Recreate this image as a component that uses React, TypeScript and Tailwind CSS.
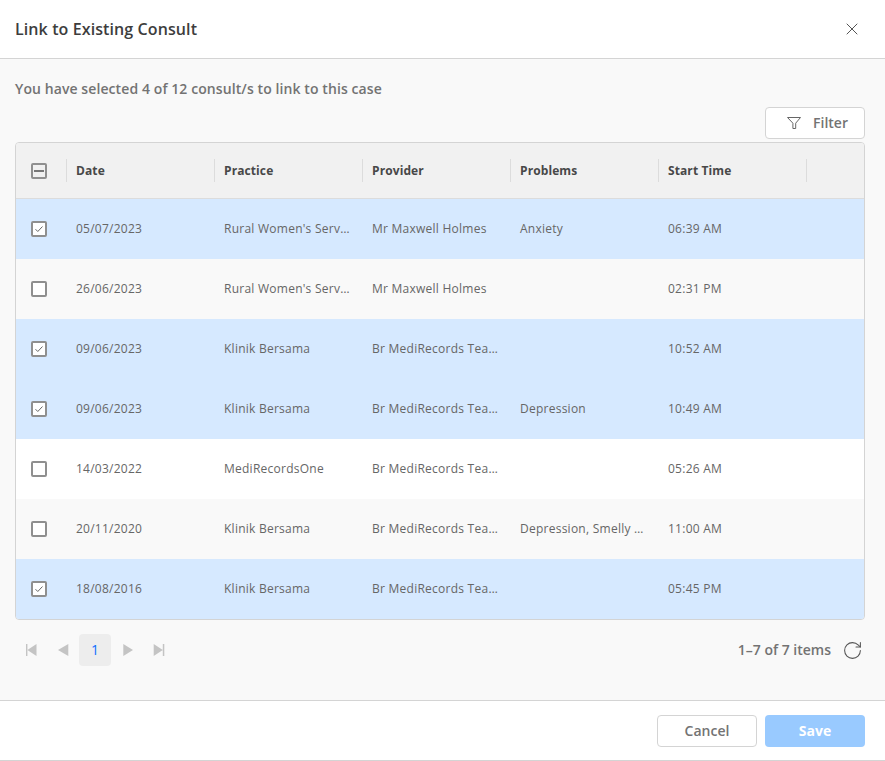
import React from "react";
import { X, RotateCw } from "lucide-react";

interface Consult {
  date: string;
  practice: string;
  provider: string;
  problems: string;
  time: string;
  selected: boolean;
}

const consults: Consult[] = [
  { date: "05/07/2023", practice: "Rural Women's Services", provider: "Mr Maxwell Holmes", problems: "Anxiety", time: "06:39 AM", selected: true },
  { date: "26/06/2023", practice: "Rural Women's Services", provider: "Mr Maxwell Holmes", problems: "", time: "02:31 PM", selected: false },
  { date: "09/06/2023", practice: "Klinik Bersama", provider: "Br MediRecords Team", problems: "", time: "10:52 AM", selected: true },
  { date: "09/06/2023", practice: "Klinik Bersama", provider: "Br MediRecords Team", problems: "Depression", time: "10:49 AM", selected: true },
  { date: "14/03/2022", practice: "MediRecordsOne", provider: "Br MediRecords Team", problems: "", time: "05:26 AM", selected: false },
  { date: "20/11/2020", practice: "Klinik Bersama", provider: "Br MediRecords Team", problems: "Depression, Smelly Feet", time: "11:00 AM", selected: false },
  { date: "18/08/2016", practice: "Klinik Bersama", provider: "Br MediRecords Team", problems: "", time: "05:45 PM", selected: true },
];

const columns = ["Date", "Practice", "Provider", "Problems", "Start Time"];

const Checkbox: React.FC<{ state: "on" | "off" | "mixed" }> = ({ state }) => (
  <span
    className={`w-4 h-4 rounded-[2px] border-2 border-[#8f8f8f] flex items-center justify-center ${
      state === "mixed" ? "bg-[#f0f0f0]" : "bg-white"
    }`}
  >
    {state === "on" && (
      <svg width="10" height="10" viewBox="0 0 10 10" fill="none" stroke="#666" strokeWidth="1">
        <path d="M1.5 5.2 L3.8 7.5 L8.5 2.5" />
      </svg>
    )}
    {state === "mixed" && <span className="w-2.5 h-0.5 bg-[#777]" />}
  </span>
);

const PagerIcon: React.FC<{ d: string }> = ({ d }) => (
  <span className="w-8 h-8 flex items-center justify-center">
    <svg width="12" height="12" viewBox="0 0 12 12" fill="#c4c4c4">
      <path d={d} />
    </svg>
  </span>
);

export default function App() {
  return (
    <div className="w-[885px] h-[761px] bg-white flex flex-col font-['Open_Sans',sans-serif]">
      {/* Header */}
      <div className="h-[59px] shrink-0 border-b border-[#d4d4d4] flex items-center justify-between pl-[15px] pr-[23px]">
        <h1 className="text-base font-semibold tracking-[0.1px] text-[#3d3d3d]">Link to Existing Consult</h1>
        <X size={20} strokeWidth={1.1} className="text-[#444]" />
      </div>

      {/* Body */}
      <div className="h-[642px] shrink-0 bg-[#f9f9f9] border-b border-[#d4d4d4] pl-[15px] pr-[20px] pt-5">
        <p className="text-sm font-semibold leading-5 tracking-[0.09px] text-[#737373]">
          You have selected 4 of 12 consult/s to link to this case
        </p>
        <div className="flex justify-end mt-[8px]">
          <button className="w-[100px] h-8 bg-white border border-[#d4d4d4] rounded-[4px] flex items-center justify-center gap-[11px] pl-1 text-sm font-semibold text-[#737373]">
            <svg width="16" height="16" viewBox="0 0 16 16" fill="none" stroke="#666" strokeWidth="1">
              <path d="M1.5 2.5 H14.5 L9.7 8.2 V13.5 H6.9 V8.2 Z" strokeLinejoin="round" />
            </svg>
            Filter
          </button>
        </div>
        <div className="mt-[3px] h-[478px] border border-[#d4d4d4] rounded-[4px] overflow-hidden">
          <div className="h-[56px] bg-[#f1f1f1] border-b border-[#dcdcdc] flex items-center">
            <div className="w-[51px] h-[23px] flex items-center pl-[15px] border-r border-[#dcdcdc]">
              <Checkbox state="mixed" />
            </div>
            {columns.map((c) => (
              <div
                key={c}
                className="w-[148px] h-[23px] px-[9px] flex items-center border-r border-[#dcdcdc] text-xs font-bold tracking-[0.1px] text-[#484848]"
              >
                {c}
              </div>
            ))}
          </div>
          {consults.map((r, i) => (
            <div
              key={i}
              className={`h-[60px] flex items-center text-xs font-medium tracking-[0.25px] text-[#666] ${
                r.selected ? "bg-[#d6e9ff]" : i % 2 === 1 ? "bg-[#f9f9f9]" : "bg-white"
              }`}
            >
              <div className="w-[51px] flex items-center pl-[15px]">
                <Checkbox state={r.selected ? "on" : "off"} />
              </div>
              <div className="w-[148px] pl-[9px] pr-3 truncate">{r.date}</div>
              <div className="w-[148px] pl-[9px] pr-3 truncate">{r.practice}</div>
              <div className="w-[148px] pl-[9px] pr-3 truncate">{r.provider}</div>
              <div className="w-[148px] pl-[9px] pr-3 truncate">{r.problems}</div>
              <div className="w-[148px] pl-[9px] pr-3 truncate">{r.time}</div>
            </div>
          ))}
        </div>

        {/* Pager */}
        <div className="mt-[14px] flex items-center justify-between">
          <div className="flex items-center">
            <PagerIcon d="M1 0 H2.4 V12 H1 Z M2.4 6 L11.5 0 V12 Z" />
            <PagerIcon d="M11.3 0 V12 L1 6 Z" />
            <span className="w-8 h-8 rounded-[4px] bg-[#ededed] flex items-center justify-center text-sm font-medium text-[#0d6efd]">
              1
            </span>
            <PagerIcon d="M2.3 0 V12 L12 6 Z" />
            <PagerIcon d="M0.7 0 L9.8 6 L0.7 12 Z M9.8 0 H11.3 V12 H9.8 Z" />
          </div>
          <div className="flex items-center gap-[11px] text-sm font-semibold text-[#737373]">
            <span>1–7 of 7 items</span>
            <RotateCw size={21} strokeWidth={1.2} className="text-[#555] mr-[2px]" />
          </div>
        </div>
      </div>

      {/* Footer */}
      <div className="h-[60px] shrink-0 border-b border-[#d4d4d4] flex items-center justify-end gap-2 pr-5">
        <button className="w-[100px] h-8 bg-white border border-[#d4d4d4] rounded-[4px] text-sm font-semibold text-[#737373]">
          Cancel
        </button>
        <button className="w-[100px] h-8 bg-[#99caff] rounded-[4px] text-sm font-bold text-white">
          Save
        </button>
      </div>
    </div>
  );
}
